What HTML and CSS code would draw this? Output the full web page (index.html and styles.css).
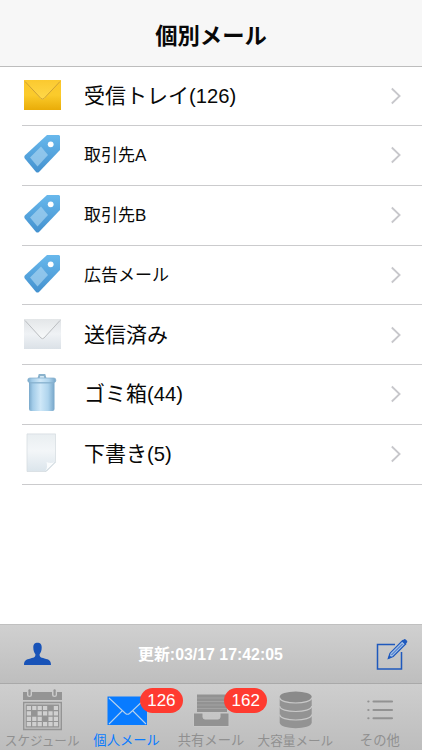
FILE: index.html
```html
<!DOCTYPE html>
<html lang="ja">
<head>
<meta charset="utf-8">
<title>個別メール</title>
<link rel="stylesheet" href="styles.css">
</head>
<body>
<svg class="defs" width="0" height="0" aria-hidden="true">
  <defs>
    <linearGradient id="gold" x1="0" y1="0" x2="0" y2="1"><stop offset="0" stop-color="#fbc62c"/><stop offset=".5" stop-color="#fbcb2b"/><stop offset="1" stop-color="#e9ac08"/></linearGradient>
    <linearGradient id="goldflap" x1="0" y1="0" x2="0" y2="1"><stop offset="0" stop-color="#fbc92f"/><stop offset="1" stop-color="#ffd94a"/></linearGradient>
    <linearGradient id="silver" x1="0" y1="0" x2="0" y2="1"><stop offset="0" stop-color="#dfe2e5"/><stop offset=".5" stop-color="#eff2f5"/><stop offset="1" stop-color="#dbe1e7"/></linearGradient>
    <linearGradient id="silverflap" x1="0" y1="0" x2="0" y2="1"><stop offset="0" stop-color="#e3e6e8"/><stop offset="1" stop-color="#f8fafb"/></linearGradient>
    <linearGradient id="blue" x1="0" y1="0" x2="0" y2="1"><stop offset="0" stop-color="#68b8ec"/><stop offset="1" stop-color="#4391cf"/></linearGradient>
    <linearGradient id="can" x1="0" y1="0" x2="1" y2="0"><stop offset="0" stop-color="#7aa9cb"/><stop offset=".15" stop-color="#a3cce8"/><stop offset=".45" stop-color="#cfe8f8"/><stop offset=".75" stop-color="#aed4ed"/><stop offset="1" stop-color="#76a5c8"/></linearGradient>
    <linearGradient id="paper" x1="0" y1="0" x2="0" y2="1"><stop offset="0" stop-color="#e9eef1"/><stop offset=".45" stop-color="#f3f6f8"/><stop offset="1" stop-color="#dbe5ec"/></linearGradient>
    <symbol id="tag" viewBox="0 0 38 40">
      <path d="M23 1h12l1 1v14L15 38q-1.500 1-3 0L.8 24.500q-1-1.500 0-3z" fill="url(#blue)"/>
      <path d="M17 12.500 24 21 13.500 32.500 6 23.500z" fill="#a6d3f1" opacity=".7"/>
      <circle cx="26.700" cy="10.300" r="2.900" fill="#fff"/>
    </symbol>
    <symbol id="chevron" viewBox="0 0 12 18"><path d="M1.800 1.500 9.600 9 1.800 16.500" fill="none" stroke="#c7c7cb" stroke-width="1.800"/></symbol>
  </defs>
</svg>
<div class="app">
  <header class="header"><h1>個別メール</h1></header>
  <main class="list">
    <div class="row"><svg class="icon" viewBox="0 0 38 40"><path d="M0 5h37v30H0z" fill="url(#gold)"/><path d="M0 5h37L20 24q-1.500 1.300-3 0z" fill="url(#goldflap)"/><path d="M1 6.500 17 23.500q1.500 1.300 3 0L36 6.500" fill="none" stroke="#cfa235" stroke-width="1"/></svg><span class="name">受信トレイ<span class="count">(126)</span></span><svg class="chevron"><use href="#chevron"/></svg></div>
    <div class="row"><svg class="icon"><use href="#tag"/></svg><span class="name small">取引先A</span><svg class="chevron"><use href="#chevron"/></svg></div>
    <div class="row"><svg class="icon"><use href="#tag"/></svg><span class="name small">取引先B</span><svg class="chevron"><use href="#chevron"/></svg></div>
    <div class="row"><svg class="icon"><use href="#tag"/></svg><span class="name small">広告メール</span><svg class="chevron"><use href="#chevron"/></svg></div>
    <div class="row"><svg class="icon" viewBox="0 0 38 40"><path d="M0 5h37v30H0z" fill="url(#silver)"/><path d="M0 5h37L20 24q-1.500 1.300-3 0z" fill="url(#silverflap)"/><path d="M1 6.500 17 24q1.500 1.300 3 0L36 6.500" fill="none" stroke="#bbbec1" stroke-width="1"/></svg><span class="name">送信済み</span><svg class="chevron"><use href="#chevron"/></svg></div>
    <div class="row"><svg class="icon" viewBox="0 0 38 40"><path d="M14.500 5.500 15.500 2h5l1 3.500" fill="#d7eaf5" stroke="#8bb3cd" stroke-width="2"/><path d="M5 8h25.500v28q0 2-2 2H7q-2 0-2-2z" fill="url(#can)"/><rect x="3.800" y="5" width="28" height="4.500" rx="2" fill="url(#can)" stroke="#83aecb" stroke-width=".7"/><path d="M6 10h23.500" stroke="#8ab4d1"/></svg><span class="name">ゴミ箱<span class="count">(44)</span></span><svg class="chevron"><use href="#chevron"/></svg></div>
    <div class="row"><svg class="icon" viewBox="0 0 38 40"><path d="M3 .9h28.500v28L22 38.500H3z" fill="url(#paper)" stroke="#d2dade" stroke-width=".7"/><path d="M31 29q-4 2-8.500 0 1.500 5-1 9z" fill="#fafcfd"/><path d="m31.500 29-9.500 9.500" stroke="#c7d2d9" stroke-width=".8"/></svg><span class="name">下書き<span class="count">(5)</span></span><svg class="chevron"><use href="#chevron"/></svg></div>
  </main>
  <div class="toolbar">
    <svg class="person" viewBox="0 0 28 24"><path d="M9.300 5.500C9.300 2 11 .8 13.500.8S17.700 2 17.700 5.500c0 3-1 5.500-2.100 6.800 0 2.700.7 3.200 4.900 4.200 4.500 1 6.500 2.200 6.500 6.500H0c0-4.300 2-5.500 6.500-6.500 4.200-1 4.900-1.500 4.900-4.200C10.300 11 9.300 8.500 9.300 5.500z" fill="#1853b8"/></svg>
    <span class="updated">更新:03/17 17:42:05</span>
    <svg class="compose" viewBox="0 0 32 33"><path d="M19 6.500H1.500V31h24V14" fill="none" stroke="#1f59bd" stroke-width="1.500"/><path d="m12.300 20.500 1.700-5.300L26.500 2.700l3.200 3.200L17.200 18.500z" fill="#9fbde6" stroke="#1f59bd" stroke-width="1.200"/><path d="m15.500 17 11-11" stroke="#1f59bd" stroke-width=".9"/><path d="m25.800 3.300 1.900-1.900q1-.8 2 0l1.300 1.300q.7.900 0 1.800l-1.900 1.900zM12 20.800l1.300-3.800 2.500 2.500z" fill="#1f59bd"/></svg>
  </div>
  <nav class="tabs">
    <div class="tab"><svg class="glyph" viewBox="0 0 84 48" fill="#949494"><path d="M23 8h4v2.500q0 2.500 2.500 2.500T32 10.500V8h20v2.500q0 2.500 2.500 2.500T57 10.500V8h5v8H23z"/><rect x="28.400" y="5.300" width="2.200" height="6.500" rx="1"/><rect x="53.500" y="5.300" width="2.200" height="6.500" rx="1"/><path d="M23.700 18.500h37.600v27H23.700z" fill="none" stroke="#949494" stroke-width="1.400"/><path d="M25.700 20.500h33.500v23H25.700z"/><g stroke="#d0d0d0" stroke-width="4.200"><path d="M26.800 24h20.700M53.800 24h4.200" stroke-dasharray="4.200 1.200"/><path d="M26.800 29.400H31M37.600 29.400H58" stroke-dasharray="4.200 1.200"/><path d="M26.800 34.800h15M48.400 34.800H58" stroke-dasharray="4.200 1.200"/><path d="M26.800 40.200H58" stroke-dasharray="4.200 1.200"/></g></svg><span class="label tight">スケジュール</span></div>
    <div class="tab active"><svg class="glyph" viewBox="0 0 84 48"><path d="M22.500 12.500H62V41H22.500z" fill="#087bff"/><path d="m24 14 16.500 15.500q2 1.500 4 0L61 14M24 40l13-13M61 40 48 27" fill="none" stroke="#b6d1ed" stroke-width="1.100"/></svg><span class="badge">126</span><span class="label">個人メール</span></div>
    <div class="tab"><svg class="glyph" viewBox="0 0 84 48" fill="#929292"><path d="M28 10.500h30V28H28z"/><path d="M28 14h30M28 17.500h30M28 21h30M28 24.500h30" stroke="#aaa" stroke-width=".7"/><path d="M24.500 29h9.500v4q0 2 2 2h13q2 0 2-2v-4H60v13.500H24.500z" stroke="#c8c8c8" stroke-width="1"/></svg><span class="badge">162</span><span class="label">共有メール</span></div>
    <div class="tab"><svg class="glyph" viewBox="0 0 84 48" fill="#939393"><path d="M26.700 13v25.500c0 7.500 32 7.500 32 0V13z"/><ellipse cx="42.700" cy="12.800" rx="16" ry="5.300" fill="#8a8a8a"/><g fill="none" stroke="#c9c9c9" stroke-width="1.200"><path d="M26.700 13.500c0 7.300 32 7.300 32 0M26.700 22c0 7.300 32 7.300 32 0M26.700 30.500c0 7.300 32 7.300 32 0"/></g></svg><span class="label tight">大容量メール</span></div>
    <div class="tab"><svg class="glyph" viewBox="0 0 84 48" fill="none" stroke="#929292" stroke-width="2.100" stroke-linecap="round"><path d="M30.300 17.500h.2M35.500 17.500H54M30.300 26h.2M35.500 26H54M30.300 34.200h.2M35.500 34.200H54"/></svg><span class="label">その他</span></div>
  </nav>
</div>
</body>
</html>
```
FILE: styles.css
```css
* { box-sizing: border-box; }
body { margin: 0; font-family: "Liberation Sans", "Noto Sans CJK JP", sans-serif; color: #080808; background: #fff; }
.defs { display: block; }
.app { width: 422px; height: 750px; display: flex; flex-direction: column; overflow: hidden; }
.header { height: 67px; padding-top: 7px; display: flex; align-items: center; justify-content: center; background: #f7f7f7; border-bottom: 1px solid #bdbdbd; }
h1 { margin: 0; font-size: 22.3px; line-height: 32px; font-weight: 700; }
.list { flex: 1; }
.row { height: 59.75px; margin-left: 22px; padding: 0 20px 0 2px; display: flex; align-items: center; border-bottom: 1px solid #cbcbcd; }
.row:first-child { height: 59px; }
.icon { width: 38px; height: 40px; margin-right: 22px; margin-top: -2px; flex: none; }
.row:first-child .icon { margin-top: -3px; }
.name { flex: 1; font-size: 21px; line-height: 30px; font-weight: 400; white-space: nowrap; }
.small { font-size: 17px; padding-top: 2px; }
.count { font-size: 20.2px; }
.chevron { width: 12px; height: 18px; flex: none; }
.toolbar { height: 60px; padding: 0 14px 0 24px; display: flex; align-items: center; justify-content: space-between; background: linear-gradient(#d0d0d0, #bebebe); border-top: 1px solid #c0c0c0; border-bottom: 1px solid #a9a9a9; }
.person { width: 28px; height: 24px; }
.updated { margin-right: 7px; padding-top: 2px; font-size: 15.9px; line-height: 24px; font-weight: 700; color: #fff; white-space: nowrap; }
.compose { width: 32px; height: 33px; }
.tabs { height: 66px; display: grid; grid-template-columns: repeat(5, 1fr); background: linear-gradient(#cecece, #bdbdbd); }
.tab { position: relative; display: flex; flex-direction: column; align-items: center; color: #909090; }
.active { color: #087bff; }
.glyph { width: 84px; height: 48px; flex: none; }
.label { font-size: 13.300px; line-height: 18px; white-space: nowrap; }
.tight { font-size: 12.600px; }
.badge { position: absolute; left: 55.500px; top: 4px; width: 43px; height: 25px; border-radius: 13px; background: #ff3b30; color: #fff; font-size: 17px; line-height: 25px; text-align: center; z-index: 1; }
```
